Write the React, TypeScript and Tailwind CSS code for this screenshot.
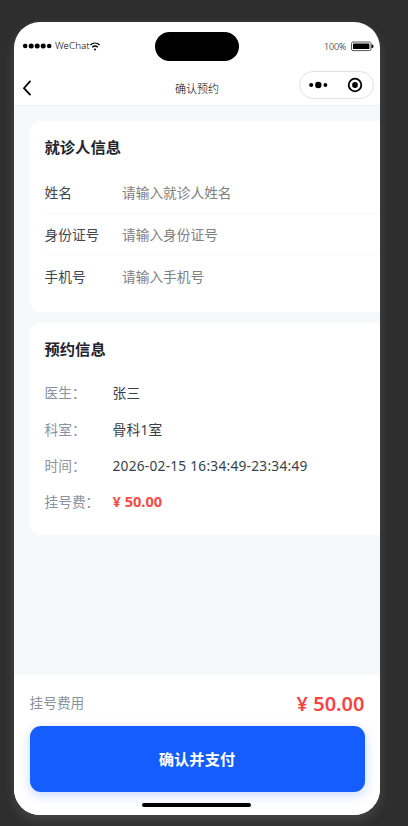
import React from "react";

const patientFields = [
  { label: "姓名", placeholder: "请输入就诊人姓名" },
  { label: "身份证号", placeholder: "请输入身份证号" },
  { label: "手机号", placeholder: "请输入手机号" },
];

const bookingRows = [
  { label: "医生：", value: "张三" },
  { label: "科室：", value: "骨科1室" },
  { label: "时间：", value: "2026-02-15 16:34:49-23:34:49" },
];

const StatusBar = () => {
  return (
    <div className="flex h-[48px] items-center justify-between pl-[9px] pr-[6px]">
      <div className="flex w-[132px] items-center">
        <svg width="29" height="6" viewBox="0 0 29 6">
          <circle cx="2.2" cy="3" r="2.3" />
          <circle cx="8.2" cy="3" r="2.5" />
          <circle cx="14.2" cy="3" r="2.5" />
          <circle cx="20.2" cy="3" r="2.5" />
          <circle cx="26.2" cy="3" r="2.3" />
        </svg>
        <span className="ml-[3px] w-[35px] whitespace-nowrap text-[9.8px] font-light leading-none text-black">
          WeChat
        </span>
        <svg
          className="mt-[1px]"
          width="10"
          height="9"
          viewBox="0 0 10 9"
          fill="none"
          stroke="#000"
          strokeWidth="1.4"
        >
          <path d="M0.4 3.1C3.1 0.5 6.9 0.5 9.6 3.1" />
          <path d="M2.2 5.3C3.9 3.8 6.1 3.8 7.8 5.3" />
          <path d="M3.6 7.1L5 8.7L6.4 7.1C5.6 6.4 4.4 6.4 3.6 7.1Z" fill="#000" stroke="none" />
        </svg>
      </div>

      <div className="h-[29px] w-[84px] rounded-full bg-black"></div>

      <div className="flex w-[135px] items-center justify-end">
        <span className="mr-[4px] text-[9px] font-light leading-none tracking-[-0.2px] text-black">
          100%
        </span>
        <svg width="24" height="11" viewBox="0 0 24 11">
          <rect x="1.5" y="1" width="19.5" height="8.6" rx="1.5" fill="none" stroke="#555" strokeWidth="1" />
          <rect x="3" y="2.5" width="16.4" height="5.6" rx="0.5" />
          <path d="M21.5 3.6H22.5Q23.5 4 23.5 5.3Q23.5 6.6 22.5 7H21.5Z" />
        </svg>
      </div>
    </div>
  );
};

const NavBar = () => {
  return (
    <div className="flex h-[36px] items-center justify-between border-b border-[#eff0f8] pl-[9px] pr-[6px]">
      <div className="w-[72px]">
        <svg
          width="8"
          height="16"
          viewBox="0 0 8 16"
          fill="none"
          stroke="#000"
          strokeWidth="1.7"
          strokeLinecap="round"
        >
          <path d="M7 1.4L1 8.2L7 14.6" />
        </svg>
      </div>
      <h1 className="pt-[1px] text-[11px] font-light leading-none text-black">确认预约</h1>
      <div className="mb-[6px] flex h-[28px] w-[75px] items-center justify-between rounded-full border border-[#e2e2e2] pl-[9px] pr-[10px]">
        <svg width="19" height="8" viewBox="0 0 19 8">
          <circle cx="2.2" cy="4" r="2.1" />
          <circle cx="9.3" cy="4" r="3.2" />
          <circle cx="16.4" cy="4" r="1.9" />
        </svg>
        <svg width="16" height="16" viewBox="0 0 16 16">
          <circle cx="8" cy="8" r="6.3" fill="none" stroke="#000" strokeWidth="1.8" />
          <circle cx="8" cy="8" r="2.9" />
        </svg>
      </div>
    </div>
  );
};

const PatientCard = () => {
  return (
    <section className="h-[191px] w-[366px] shrink-0 rounded-[11px] bg-white pl-[14.5px] pt-[14px]">
      <h2 className="mb-[13px] text-[15.3px] font-semibold leading-[24px] text-[#22252e]">
        就诊人信息
      </h2>
      {patientFields.map((field) => (
        <label
          key={field.label}
          className="flex h-[41.6px] items-center border-b border-[#f8f9fa] pt-[2px] last:border-b-0"
        >
          <span className="w-[77.5px] text-[13.7px] text-[#42464f]">
            {field.label}
          </span>
          <input
            type="text"
            placeholder={field.placeholder}
            className="w-[200px] bg-transparent text-[13.7px] outline-none placeholder:text-[#808080]"
          />
        </label>
      ))}
    </section>
  );
};

const BookingCard = () => {
  return (
    <section className="mt-[11px] h-[212px] w-[366px] shrink-0 rounded-[11px] bg-white pl-[14.5px] pt-[14px]">
      <h2 className="mb-[14.5px] text-[15.3px] font-semibold leading-[24px] text-[#22252e]">
        预约信息
      </h2>
      {bookingRows.map((row) => (
        <div key={row.label} className="flex h-[36.3px] items-center text-[13.7px]">
          <span className="w-[68px] text-[#8a919f]">{row.label}</span>
          <span className="whitespace-nowrap tracking-[0.25px] text-[#3a3e48]">
            {row.value}
          </span>
        </div>
      ))}
      <div className="flex h-[36.3px] items-center text-[13.7px]">
        <span className="w-[68px] text-[#8a919f]">挂号费：</span>
        <span className="pb-[2px] text-[14.6px] font-bold text-[#f84a4a]">¥ 50.00</span>
      </div>
    </section>
  );
};

const PayFooter = () => {
  return (
    <footer className="flex h-[140px] flex-col items-center bg-white px-[15.5px] pt-[12px]">
      <div className="flex h-[39px] w-full items-start justify-between">
        <span className="text-[13.7px] leading-[31px] text-[#8a919f]">挂号费用</span>
        <span className="text-[20px] font-semibold leading-[33px] text-[#f84444]">¥ 50.00</span>
      </div>
      <button className="h-[66px] w-full shrink-0 rounded-[11px] bg-[#165dff] text-[15.3px] font-bold text-white shadow-[0_3px_11px_rgba(22,93,255,0.25)]">
        确认并支付
      </button>
      <div className="mr-[1px] mt-[11px] h-[4px] w-[109px] rounded-full bg-black"></div>
    </footer>
  );
};

const App = () => {
  return (
    <div className="h-[826px] w-[408px] overflow-hidden bg-[#2e2e2e] pl-[14px] pt-[22px] font-['Noto_Sans','Noto_Sans_CJK_SC',sans-serif]">
      <div className="flex h-[793px] w-[366px] flex-col overflow-hidden rounded-[26px] bg-white shadow-[0_5px_12px_rgba(255,255,255,0.12)]">
        <StatusBar />
        <NavBar />
        <main className="flex flex-1 flex-col overflow-hidden bg-[#f7f8fa] pl-[16px] pt-[15px]">
          <PatientCard />
          <BookingCard />
        </main>
        <PayFooter />
      </div>
    </div>
  );
};

export default App;
